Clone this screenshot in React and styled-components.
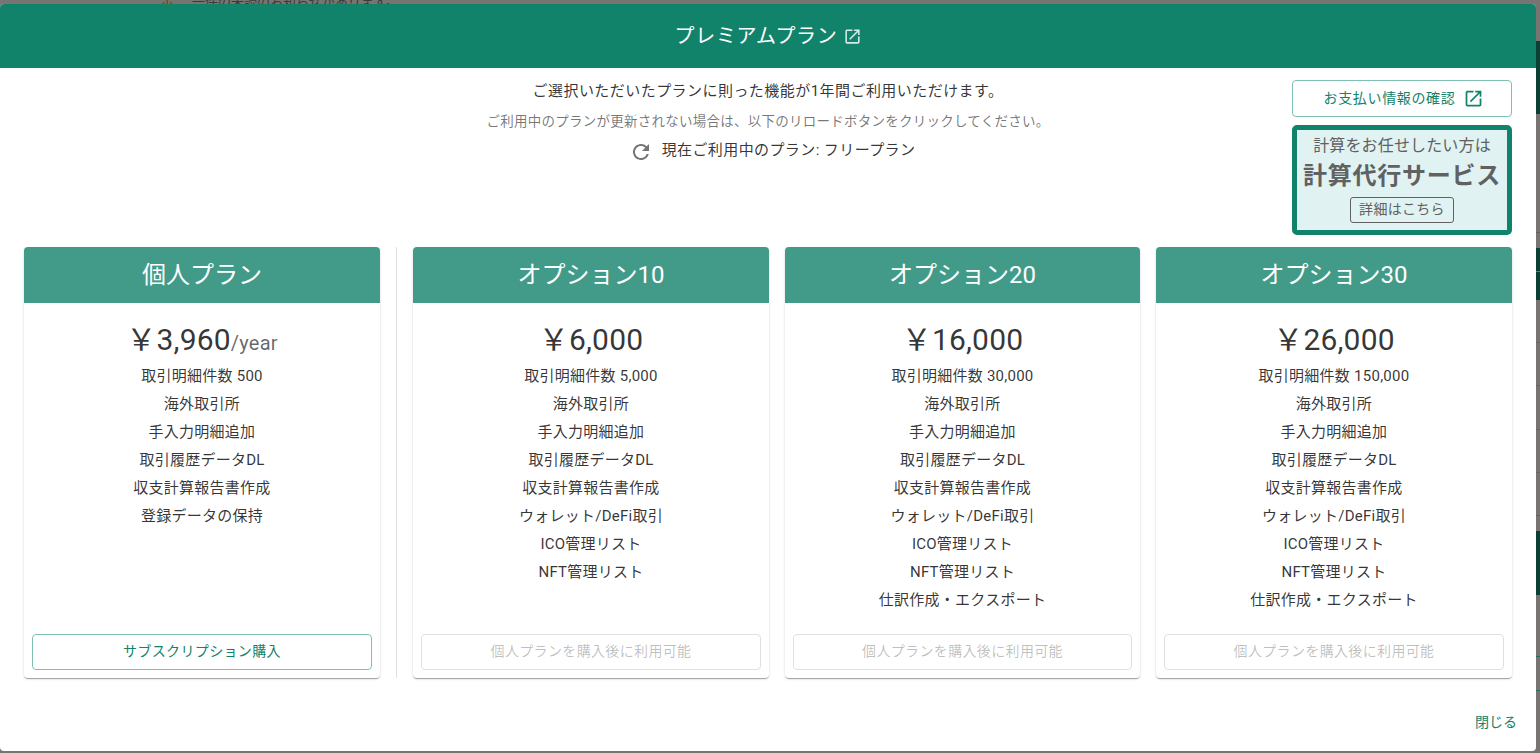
import React from "react";
import styled, { createGlobalStyle } from "styled-components";
import { MdOpenInNew, MdRefresh } from "react-icons/md";

const GlobalStyle = createGlobalStyle`
  html, body {
    margin: 0;
    height: 100%;
    overflow: hidden;
  }
  body {
    background: #777471;
    font-family: Roboto, "Noto Sans CJK JP", sans-serif;
    color: rgba(0, 0, 0, 0.8);
  }
  * {
    box-sizing: border-box;
  }
`;

const Page = styled.div`
  width: 1540px;
  height: 753px;
  padding: 4px 4px 2px 0;
  position: relative;
  overflow: hidden;
`;
const BehindText = styled.div`
  position: absolute;
  top: -9px;
  left: 192px;
  font-size: 13px;
  color: #3d3a36;
  white-space: nowrap;
`;
const BehindIcon = styled.div`
  position: absolute;
  top: -9px;
  left: 160px;
  font-size: 14px;
  color: #6e4310;
`;
const SideBand = styled.div`
  position: absolute;
  right: 0;
  width: 4px;
  top: ${(p) => p.$top}px;
  height: ${(p) => p.$height}px;
  background: ${(p) => p.$color || "#0d4035"};
`;
const Dialog = styled.div`
  position: relative;
  height: 100%;
  background: #fff;
  border-radius: 4px;
  overflow: hidden;
  display: flex;
  flex-direction: column;
`;
const Header = styled.div`
  height: 64px;
  flex: none;
  padding-bottom: 3px;
  background: #12836b;
  color: #fff;
  font-size: 20px;
  letter-spacing: 0.7px;
  display: flex;
  align-items: center;
  justify-content: center;
  gap: 5px;
  svg {
    width: 19px;
    height: 19px;
    margin-top: 3px;
    color: #d5ebe6;
  }
`;
const Body = styled.div`
  padding: 12px 24px 0;
  display: flex;
  flex-direction: column;
`;
const Top = styled.div`
  height: 167px;
  flex: none;
  display: flex;
  justify-content: space-between;
`;
const Intro = styled.div`
  flex: 1;
  padding: 1px 0 0 220px;
  display: flex;
  flex-direction: column;
  align-items: center;
  font-size: 15px;
  letter-spacing: 0.45px;
`;
const IntroLine = styled.div`
  height: 20px;
  line-height: 20px;
  margin-bottom: 10px;
`;
const IntroNote = styled(IntroLine)`
  font-size: 13.5px;
  letter-spacing: 0.25px;
  margin-bottom: 7px;
  color: rgba(0, 0, 0, 0.54);
`;
const CurrentPlan = styled.div`
  display: flex;
  align-items: center;
  gap: 9px;
  height: 24px;
  margin-left: 8px;
  letter-spacing: 0.4px;
  line-height: 20px;
  svg {
    width: 24px;
    height: 24px;
    margin-top: 3px;
    color: #757575;
  }
`;
const Side = styled.div`
  width: 220px;
  flex: none;
  display: flex;
  flex-direction: column;
  gap: 8px;
`;
const PayButton = styled.div`
  height: 37px;
  padding: 0 0 4px 4px;
  border: 1px solid #7fc0b2;
  border-radius: 4px;
  color: #12836b;
  font-size: 14px;
  letter-spacing: 0.65px;
  display: flex;
  align-items: center;
  justify-content: center;
  gap: 8px;
  svg {
    width: 21px;
    height: 21px;
    margin-top: 4px;
  }
`;
const Promo = styled.div`
  height: 110px;
  border: 5px solid #12836b;
  border-radius: 5px;
  background: #e0f2f1;
  color: #616161;
  display: flex;
  flex-direction: column;
  align-items: center;
`;
const PromoLead = styled.div`
  font-size: 16px;
  letter-spacing: 0.15px;
  line-height: 22px;
  margin-top: 5px;
`;
const PromoTitle = styled.div`
  font-size: 24px;
  letter-spacing: 0.75px;
  font-weight: 700;
  line-height: 34px;
  margin-top: 2px;
`;
const PromoButton = styled.div`
  width: 104px;
  height: 26px;
  margin-top: 4px;
  border: 1px solid #616161;
  border-radius: 3px;
  font-size: 14px;
  letter-spacing: 0.3px;
  line-height: 22px;
  text-align: center;
`;
const Plans = styled.div`
  display: flex;
  align-items: stretch;
  height: 431px;
  flex: none;
`;
const Divider = styled.div`
  width: 1px;
  background: #e0e0e0;
  margin: 0 16px;
  flex: none;
`;
const PlanGroup = styled.div`
  flex: 1;
  display: flex;
  gap: 16px;
`;
const Card = styled.div`
  width: ${(p) => p.$width}px;
  flex: none;
  border-radius: 4px;
  background: #fff;
  overflow: hidden;
  display: flex;
  flex-direction: column;
  box-shadow: 0 2px 1px -1px rgba(0, 0, 0, 0.2), 0 1px 1px 0 rgba(0, 0, 0, 0.14),
    0 1px 3px 0 rgba(0, 0, 0, 0.12);
`;
const CardHead = styled.div`
  height: 56px;
  flex: none;
  padding-bottom: 5px;
  background: #429b88;
  color: #fff;
  font-size: 24px;
  display: flex;
  align-items: center;
  justify-content: center;
`;
const Price = styled.div`
  margin-top: 18px;
  height: 38px;
  line-height: 38px;
  font-size: 30px;
  text-align: center;
  letter-spacing: 0.2px;
`;
const PerYear = styled.span`
  font-size: 20px;
  color: rgba(0, 0, 0, 0.6);
`;
const Features = styled.div`
  margin-top: 3px;
  flex: 1;
`;
const Feature = styled.div`
  height: 28px;
  line-height: 28px;
  font-size: 15px;
  letter-spacing: 0.25px;
  text-align: center;
`;
const BuyButton = styled.div`
  height: 36px;
  margin: 0 8px 8px;
  padding-bottom: 4px;
  border: 1px solid ${(p) => (p.$disabled ? "#e0e0e0" : "#7fc0b2")};
  border-radius: 4px;
  color: ${(p) => (p.$disabled ? "rgba(0, 0, 0, 0.26)" : "#12836b")};
  font-size: 14px;
  letter-spacing: 0.35px;
  display: flex;
  align-items: center;
  justify-content: center;
`;
const Footer = styled.div`
  flex: 1;
  display: flex;
  justify-content: flex-end;
  align-items: flex-start;
  padding: 34px 19px 0 0;
`;
const CloseText = styled.div`
  color: #12836b;
  font-size: 14px;
  line-height: 20px;
`;

const behindBands = [
  { top: 41, height: 73 },
  { top: 232, height: 1, color: "#636160" },
  { top: 248, height: 23 },
  { top: 272, height: 28 },
  { top: 342, height: 1, color: "#686664" },
  { top: 385, height: 1, color: "#686664" },
  { top: 429, height: 1, color: "#686664" },
  { top: 472, height: 1, color: "#686664" },
  { top: 515, height: 1, color: "#636160" },
  { top: 531, height: 64 },
  { top: 656, height: 1, color: "#2f6b5c" },
  { top: 690, height: 1, color: "#2f6b5c" },
];
const commonFeatures = [
  "海外取引所",
  "手入力明細追加",
  "取引履歴データDL",
  "収支計算報告書作成",
];
const optionFeatures = [
  "ウォレット/DeFi取引",
  "ICO管理リスト",
  "NFT管理リスト",
];
const options = [
  {
    name: "オプション10",
    price: "￥6,000",
    count: "5,000",
    width: 356,
    features: optionFeatures,
  },
  {
    name: "オプション20",
    price: "￥16,000",
    count: "30,000",
    width: 355,
    features: [...optionFeatures, "仕訳作成・エクスポート"],
  },
  {
    name: "オプション30",
    price: "￥26,000",
    count: "150,000",
    width: 356,
    features: [...optionFeatures, "仕訳作成・エクスポート"],
  },
];

const PlanCard = ({ name, price, unit, count, features, width, action, disabled }) => (
  <Card $width={width}>
    <CardHead>{name}</CardHead>
    <Price>
      {price}
      {unit && <PerYear>{unit}</PerYear>}
    </Price>
    <Features>
      <Feature>取引明細件数 {count}</Feature>
      {commonFeatures.map((f) => (
        <Feature key={f}>{f}</Feature>
      ))}
      {features.map((f) => (
        <Feature key={f}>{f}</Feature>
      ))}
    </Features>
    <BuyButton $disabled={disabled}>{action}</BuyButton>
  </Card>
);

const App = () => {
  return (
    <Page>
      <GlobalStyle />
      <BehindIcon>ホ</BehindIcon>
      <BehindText>一件の未読のお知らせがあります。</BehindText>
      {behindBands.map((b) => (
        <SideBand key={b.top} $top={b.top} $height={b.height} $color={b.color} />
      ))}
      <Dialog>
        <Header>
          プレミアムプラン
          <MdOpenInNew />
        </Header>
        <Body>
          <Top>
            <Intro>
              <IntroLine>ご選択いただいたプランに則った機能が1年間ご利用いただけます。</IntroLine>
              <IntroNote>ご利用中のプランが更新されない場合は、以下のリロードボタンをクリックしてください。</IntroNote>
              <CurrentPlan>
                <MdRefresh />
                現在ご利用中のプラン: フリープラン
              </CurrentPlan>
            </Intro>
            <Side>
              <PayButton>
                お支払い情報の確認
                <MdOpenInNew />
              </PayButton>
              <Promo>
                <PromoLead>計算をお任せしたい方は</PromoLead>
                <PromoTitle>計算代行サービス</PromoTitle>
                <PromoButton>詳細はこちら</PromoButton>
              </Promo>
            </Side>
          </Top>
          <Plans>
            <PlanCard
              name="個人プラン"
              price="￥3,960"
              unit="/year"
              count="500"
              width={356}
              features={["登録データの保持"]}
              action="サブスクリプション購入"
            />
            <Divider />
            <PlanGroup>
              {options.map((o) => (
                <PlanCard key={o.name} {...o} action="個人プランを購入後に利用可能" disabled />
              ))}
            </PlanGroup>
          </Plans>
        </Body>
        <Footer>
          <CloseText>閉じる</CloseText>
        </Footer>
      </Dialog>
    </Page>
  );
};

export default App;
